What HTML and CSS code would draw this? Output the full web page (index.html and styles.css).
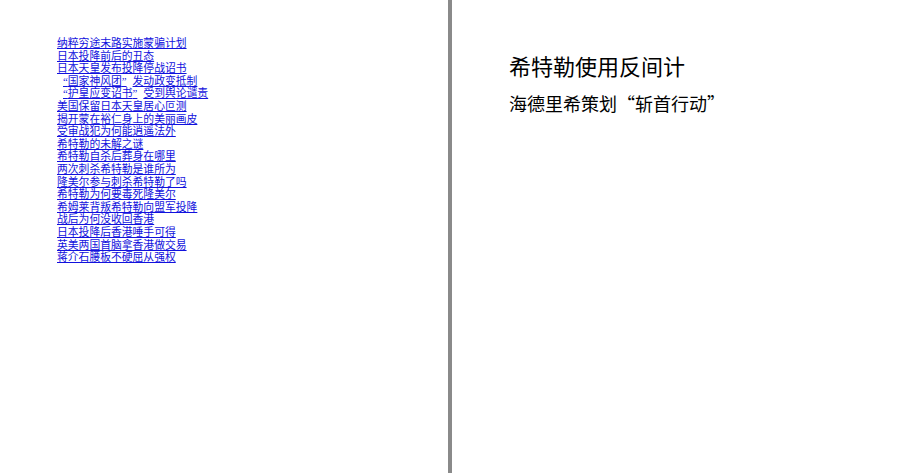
FILE: index.html
```html
<!DOCTYPE html>
<html lang="zh-CN">
<head>
<meta charset="utf-8">
<title>希特勒使用反间计</title>
<link rel="stylesheet" href="styles.css">
</head>
<body>
<div class="frameset">
  <nav class="left-pane">
    <ul class="toc">
      <li><a href="#">纳粹穷途末路实施蒙骗计划</a></li>
      <li><a href="#">日本投降前后的丑态</a></li>
      <li><a href="#">日本天皇发布投降停战诏书</a></li>
      <li><a href="#"><span class="qo">“</span>国家神风团<span class="qc">”</span>发动政变抵制</a></li>
      <li><a href="#"><span class="qo">“</span>护皇应变诏书<span class="qc">”</span>受到舆论谴责</a></li>
      <li><a href="#">美国保留日本天皇居心叵测</a></li>
      <li><a href="#">揭开蒙在裕仁身上的美丽画皮</a></li>
      <li><a href="#">受审战犯为何能逍遥法外</a></li>
      <li><a href="#">希特勒的未解之谜</a></li>
      <li><a href="#">希特勒自杀后葬身在哪里</a></li>
      <li><a href="#">两次刺杀希特勒是谁所为</a></li>
      <li><a href="#">隆美尔参与刺杀希特勒了吗</a></li>
      <li><a href="#">希特勒为何要毒死隆美尔</a></li>
      <li><a href="#">希姆莱背叛希特勒向盟军投降</a></li>
      <li><a href="#">战后为何没收回香港</a></li>
      <li><a href="#">日本投降后香港唾手可得</a></li>
      <li><a href="#">英美两国首脑拿香港做交易</a></li>
      <li><a href="#">蒋介石腰板不硬屈从强权</a></li>
    </ul>
  </nav>
  <div class="divider"></div>
  <main class="right-pane">
    <h1 class="title">希特勒使用反间计</h1>
    <h2 class="subtitle">海德里希策划“斩首行动”</h2>
  </main>
</div>
</body>
</html>
```
FILE: styles.css
```css
html, body {
  margin: 0;
  padding: 0;
  height: 100%;
  background: #ffffff;
}

.frameset {
  display: flex;
  height: 473px;
  overflow: hidden;
}

.left-pane {
  width: 448px;
  flex: 0 0 448px;
  padding: 37px 0 0 57px;
  box-sizing: border-box;
}

.toc {
  list-style: none;
  margin: 0;
  padding: 0;
  font-family: "Liberation Serif", "Noto Sans CJK SC", serif;
  font-size: 10.8px;
  line-height: 12.6px;
}

.toc a {
  color: #1111dd;
  text-decoration: underline;
}

.qo {
  padding-left: 6px;
}

.qc {
  padding-right: 6px;
}

.divider {
  flex: 0 0 4px;
  background: #8a8a8a;
}

.right-pane {
  flex: 1;
  padding: 52px 0 0 57px;
  display: flex;
  flex-direction: column;
  gap: 14px;
  font-family: "Noto Sans CJK SC", sans-serif;
  font-variant-east-asian: full-width;
  color: #000000;
}

.title {
  margin: 0;
  font-size: 22px;
  line-height: 26px;
  font-weight: normal;
}

.subtitle {
  margin: 0;
  font-size: 18px;
  line-height: 22px;
  font-weight: normal;
}
```
